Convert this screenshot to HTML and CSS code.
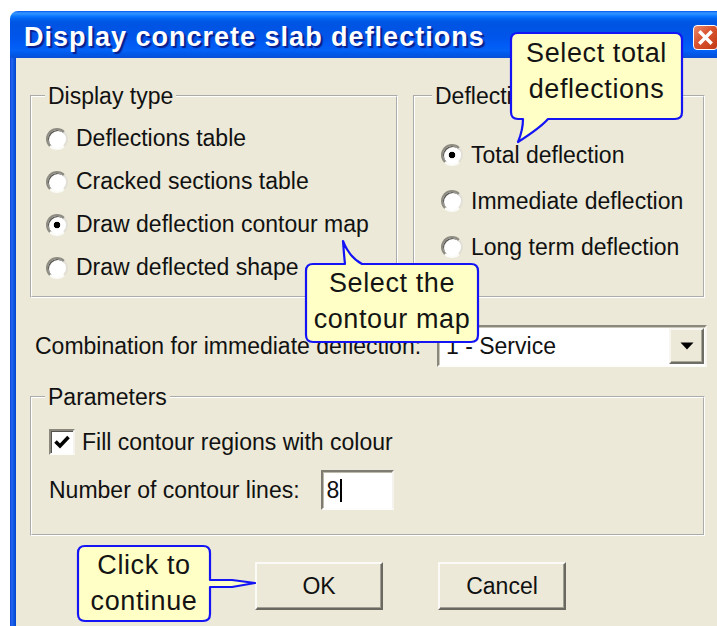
FILE: index.html
```html
<!DOCTYPE html>
<html>
<head>
<meta charset="utf-8">
<title>Display concrete slab deflections</title>
<link rel="stylesheet" href="styles.css">
</head>
<body>
<div class="stage">
  <div class="window">
    <div class="titlebar">
      <span class="title">Display concrete slab deflections</span>
      <span class="close">
        <svg width="25" height="25" viewBox="0 0 25 25">
          <path d="M7.5 7.5 L17.5 17.5 M17.5 7.5 L7.5 17.5" stroke="#fff" stroke-width="3.4" stroke-linecap="square"/>
        </svg>
      </span>
    </div>
    <div class="frame">
      <div class="content">
        <div class="top-groups">
          <fieldset class="group group-display">
            <legend>Display type</legend>
            <div class="radio-row"><span class="radio"></span>Deflections table</div>
            <div class="radio-row"><span class="radio"></span>Cracked sections table</div>
            <div class="radio-row"><span class="radio on"></span>Draw deflection contour map</div>
            <div class="radio-row"><span class="radio"></span>Draw deflected shape</div>
          </fieldset>
          <fieldset class="group group-deflection">
            <legend>Deflection type</legend>
            <div class="radio-row"><span class="radio on"></span>Total deflection</div>
            <div class="radio-row"><span class="radio"></span>Immediate deflection</div>
            <div class="radio-row"><span class="radio"></span>Long term deflection</div>
          </fieldset>
        </div>

        <div class="combo-row">
          <span class="combo-label">Combination for immediate deflection:</span>
          <div class="combo">
            <span class="combo-value">1 - Service</span>
            <span class="combo-btn">
              <svg width="14" height="8" viewBox="0 0 14 8"><path d="M0.5 0.5 H13.5 L7 7.5 Z" fill="#000"/></svg>
            </span>
          </div>
        </div>

        <fieldset class="group group-params">
          <legend>Parameters</legend>
          <div class="check-row">
            <span class="checkbox">
              <svg width="22" height="22" viewBox="0 0 22 22"><path d="M4.5 10.5 L9 15 L17.5 6" fill="none" stroke="#000" stroke-width="3.6"/></svg>
            </span>
            Fill contour regions with colour
          </div>
          <div class="field-row">
            <span>Number of contour lines:</span>
            <div class="edit">8<span class="caret"></span></div>
          </div>
        </fieldset>

        <div class="buttons">
          <div class="btn">OK</div>
          <div class="btn">Cancel</div>
        </div>
      </div>
    </div>
  </div>

  <!-- help callouts laid over the dialog -->
  <div class="callout callout-total">
    <svg class="callout-shape" width="173" height="88" viewBox="0 0 173 88">
      <path d="M8 1 H165 Q172 1 172 8 V80 Q172 87 165 87 H38 Q30 96 8 110 Q13 98 13 87 H8 Q1 87 1 80 V8 Q1 1 8 1 Z"/>
    </svg>
    <div class="callout-text">Select total<br>deflections</div>
  </div>

  <div class="callout callout-map">
    <svg class="callout-shape" width="174" height="80" viewBox="0 0 174 80">
      <path d="M8 1 H40 Q39 -8 38 -22 Q44 -6 57 1 H166 Q173 1 173 8 V72 Q173 79 166 79 H8 Q1 79 1 72 V8 Q1 1 8 1 Z"/>
    </svg>
    <div class="callout-text">Select the<br>contour map</div>
  </div>

  <div class="callout callout-ok">
    <svg class="callout-shape" width="134" height="77" viewBox="0 0 134 77">
      <path d="M8 1 H126 Q133 1 133 8 V35 H155 L178 38 L155 42 H133 V69 Q133 76 126 76 H8 Q1 76 1 69 V8 Q1 1 8 1 Z"/>
    </svg>
    <div class="callout-text">Click to<br>continue</div>
  </div>
</div>
</body>
</html>
```

FILE: styles.css
```css
html, body {
  margin: 0;
  padding: 0;
  background: #fff;
  overflow: hidden;
}

body {
  font-family: "Liberation Sans", Arial, sans-serif;
  font-size: 23px;
  color: #111;
}

.stage {
  position: relative;
  width: 717px;
  height: 626px;
  overflow: hidden;
}

/* ---------- window chrome ---------- */
.window {
  margin: 11px 0 0 10px;
  width: 715px;
}

.titlebar {
  height: 47px;
  box-sizing: border-box;
  padding: 6px 7px 0 14px;
  display: flex;
  align-items: center;
  justify-content: space-between;
  border-radius: 8px 8px 0 0;
  background: linear-gradient(180deg,
    #0058ee 0%, #3593ff 4%, #288eff 7%, #127dff 10%, #036ffc 13%,
    #0262ee 17%, #0057e5 23%, #0054e3 30%, #0055eb 58%, #005bf5 70%,
    #0462f6 84%, #0058e8 92%, #0a4fd6 100%);
}

.title {
  color: #fff;
  font-weight: bold;
  font-size: 27px;
  letter-spacing: 1px;
  white-space: nowrap;
  text-shadow: 2px 2px 1px #0a1f8c;
}

.close {
  width: 25px;
  height: 25px;
  flex: none;
  box-sizing: border-box;
  border: 1px solid #fff;
  border-radius: 4px;
  background: linear-gradient(135deg, #ec8a6c 0%, #d9532f 45%, #c23a15 100%);
  display: flex;
}

.close svg {
  margin: -1px;
}

.frame {
  height: 580px;
  padding: 0 6px;
  background: linear-gradient(90deg, #0b46d8 0, #2466f0 2px, #0a56e2 4px, #0744c6 6px) 0 0 / 6px 100% repeat-x;
}

.content {
  height: 100%;
  box-sizing: border-box;
  background: #ece9d8;
  padding: 26px 14px 0 14px;
}

/* ---------- group boxes ---------- */
.group {
  margin: 0;
  padding: 0;
  min-width: 0;
  border: 2px groove #fff;
}

/* the legend is offset by the fieldset's left padding, so margins compensate */
.group legend {
  padding: 0 3px;
  line-height: 24px;
}

.top-groups {
  display: flex;
  gap: 15px;
}

.group-display {
  width: 368px;
  box-sizing: border-box;
  padding: 9px 0 7px 14px;
}

.group-display legend {
  margin-left: -1px;
}

.group-deflection {
  flex: 1;
  padding: 24px 0 0 26px;
}

.group-deflection legend {
  margin-left: -9px;
}

.radio-row {
  display: flex;
  align-items: center;
  gap: 8px;
  height: 43px;
  white-space: nowrap;
}

.group-deflection .radio-row {
  height: 46px;
}

.radio {
  width: 22px;
  height: 22px;
  flex: none;
  box-sizing: border-box;
  border-radius: 50%;
  border: 2px solid;
  border-color: #8d8b82 #e2e0d6 #fbfbf8 #8d8b82;
  background: radial-gradient(circle at 60% 60%, #fff 55%, #ecebe5 100%);
  box-shadow: inset 1px 1px 0 #55544e;
}

.radio.on {
  background: radial-gradient(circle at 50% 50%, #000 0 3px, transparent 3.6px),
              radial-gradient(circle at 60% 60%, #fff 55%, #ecebe5 100%);
}

/* ---------- combination row ---------- */
.combo-row {
  display: flex;
  align-items: center;
  height: 42px;
  margin: 27px -2px 0 0;
  padding-left: 5px;
}

.combo-label {
  white-space: nowrap;
}

.combo {
  margin-left: auto;
  width: 270px;
  height: 42px;
  box-sizing: border-box;
  border: 2px solid;
  border-color: #8a887c #f6f5f0 #fdfdfb #8a887c;
  box-shadow: inset 1px 1px 0 #c9c6b8;
  background: #fff;
  padding: 1px;
  display: flex;
  align-items: center;
}

.combo-value {
  padding-left: 6px;
  flex: 1;
  white-space: nowrap;
}

.combo-btn {
  width: 35px;
  height: 36px;
  box-sizing: border-box;
  border: 2px solid;
  border-color: #f7f6f0 #6f6e66 #6f6e66 #f7f6f0;
  box-shadow: inset -1px -1px 0 #a8a697;
  background: #ece9d8;
  display: flex;
  align-items: center;
  justify-content: center;
}

/* ---------- parameters ---------- */
.group-params {
  margin-top: 18px;
  padding: 18px 0 24px 17px;
}

.group-params legend {
  margin-left: -4px;
}

.check-row {
  display: flex;
  align-items: center;
  gap: 7px;
  height: 30px;
  white-space: nowrap;
}

.checkbox {
  width: 26px;
  height: 26px;
  box-sizing: border-box;
  border: 2px solid;
  border-color: #8a887c #f4f3ee #fdfdfb #8a887c;
  box-shadow: inset 1px 1px 0 #55544e;
  background: #fff;
  display: flex;
  align-items: center;
  justify-content: center;
}

.field-row {
  display: flex;
  align-items: center;
  height: 40px;
  margin-top: 13px;
  white-space: nowrap;
}

.edit {
  margin-left: 21px;
  width: 73px;
  height: 40px;
  box-sizing: border-box;
  border: 2px solid;
  border-color: #7e7c72 #f4f3ee #fdfdfb #7e7c72;
  box-shadow: inset 1px 1px 0 #bdbaac;
  background: #fff;
  padding-left: 4px;
  display: flex;
  align-items: center;
}

.caret {
  width: 2px;
  height: 23px;
  background: #000;
  margin-left: 1px;
}

/* ---------- buttons ---------- */
.buttons {
  display: flex;
  gap: 55px;
  margin-top: 26px;
  padding-left: 225px;
}

.btn {
  width: 128px;
  height: 48px;
  box-sizing: border-box;
  border: 2px solid;
  border-color: #fbfaf6 #6a6961 #6a6961 #fbfaf6;
  box-shadow: inset -1px -1px 0 #a19f91;
  background: #ece9d8;
  display: flex;
  align-items: center;
  justify-content: center;
}

/* ---------- callouts ---------- */
.callout {
  position: absolute;
  box-sizing: border-box;
  text-align: center;
  font-size: 27px;
  letter-spacing: 0.6px;
  line-height: 36px;
  color: #141414;
}

.callout-shape {
  position: absolute;
  left: 0;
  top: 0;
  overflow: visible;
}

.callout-shape path {
  fill: #ffffc6;
  stroke: #1414f5;
  stroke-width: 2.2;
  stroke-linejoin: round;
}

.callout-text {
  position: relative;
}

.callout-total {
  left: 510px;
  top: 32px;
  width: 173px;
  height: 88px;
  padding-top: 3px;
}

.callout-map {
  left: 305px;
  top: 263px;
  width: 174px;
  height: 80px;
  padding-top: 2px;
}

.callout-ok {
  left: 77px;
  top: 545px;
  width: 134px;
  height: 77px;
  padding-top: 2px;
}
```
